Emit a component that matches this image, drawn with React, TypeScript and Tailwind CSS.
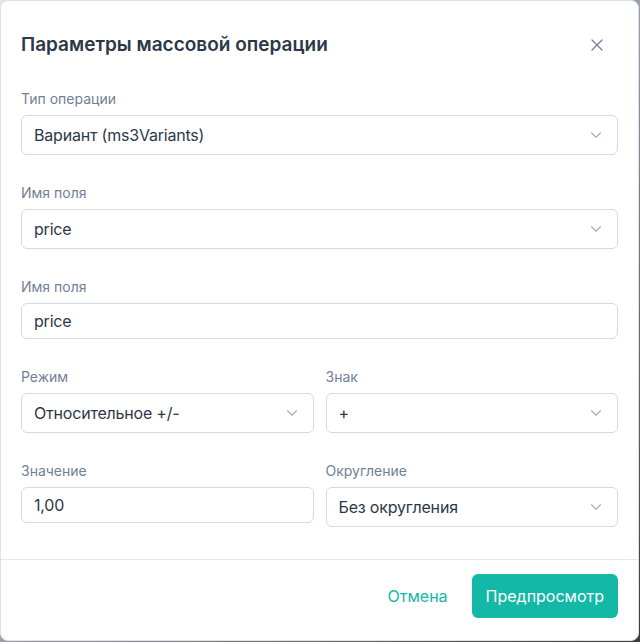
import { X, ChevronDown } from "lucide-react";

const font = { fontFamily: "Inter, 'Noto Sans', sans-serif" };

function Label({ children }: { children: React.ReactNode }) {
  return <div className="mb-[6px] text-[14px] leading-5 text-[#718096]">{children}</div>;
}

function SelectBox({ value }: { value: string }) {
  return (
    <div className="flex h-10 items-center justify-between rounded-md border border-[#d3dae4] bg-white pl-3 pr-3 text-[16px] tracking-[-0.2px] text-[#2d3748]">
      <span>{value}</span>
      <ChevronDown className="h-[18px] w-[18px] text-[#a0aec0]" strokeWidth={1.5} />
    </div>
  );
}

function InputBox({ value }: { value: string }) {
  return (
    <div className="flex h-9 items-center rounded-md border border-[#d3dae4] bg-white px-3 text-[16px] tracking-[-0.2px] text-[#2d3748]">
      {value}
    </div>
  );
}

export default function App() {
  return (
    <div className="h-[642px] w-[640px] bg-gradient-to-br from-[#e2e6ec] via-[#9aa1ab] to-[#3a3d42]" style={font}>
      <div className="flex h-[641px] w-[639px] flex-col rounded-lg border border-[#dde3ea] bg-white">
        {/* Header */}
        <div className="flex items-center justify-between px-5 pt-[30px]">
          <h2 className="text-[19px] font-semibold leading-7 text-[#2d3748]">Параметры массовой операции</h2>
          <X className="mr-[11px] h-[20px] w-[20px] text-[#718096]" strokeWidth={1.5} />
        </div>

        {/* Body */}
        <div className="flex flex-col gap-7 px-5 pb-[32px] pt-[30px]">
          <div>
            <Label>Тип операции</Label>
            <SelectBox value="Вариант (ms3Variants)" />
          </div>
          <div>
            <Label>Имя поля</Label>
            <SelectBox value="price" />
          </div>
          <div>
            <Label>Имя поля</Label>
            <InputBox value="price" />
          </div>
          <div className="grid grid-cols-2 gap-3">
            <div>
              <Label>Режим</Label>
              <SelectBox value="Относительное +/-" />
            </div>
            <div>
              <Label>Знак</Label>
              <SelectBox value="+" />
            </div>
          </div>
          <div className="grid grid-cols-2 items-start gap-3">
            <div>
              <Label>Значение</Label>
              <InputBox value="1,00" />
            </div>
            <div>
              <Label>Округление</Label>
              <SelectBox value="Без округления" />
            </div>
          </div>
        </div>

        {/* Footer */}
        <div className="flex items-center justify-end gap-3 border-t border-[#e2e8f0] px-5 pb-[21px] pt-[14px]">
          <button className="h-11 px-3 text-[16px] font-normal text-[#14b8a6]">Отмена</button>
          <button className="h-11 rounded-md bg-[#14b8a6] px-[14px] text-[16px] font-normal text-white">
            Предпросмотр
          </button>
        </div>
      </div>
    </div>
  );
}
